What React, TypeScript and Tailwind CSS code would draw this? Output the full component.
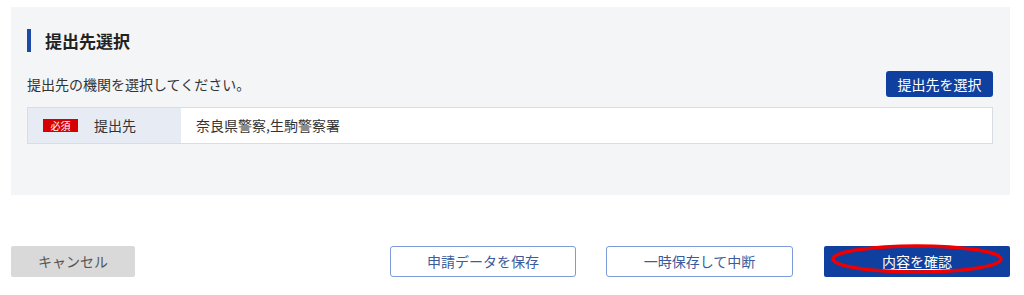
export default function App() {
  return (
    <div
      className="w-[1024px] h-[295px] bg-white pt-[7px] text-[#333]"
      style={{ fontFamily: '"Noto Sans CJK JP", "Noto Sans", sans-serif' }}
    >
      {/* 提出先選択 panel */}
      <section className="ml-[11px] w-[999px] h-[188px] bg-[#f4f5f7] pl-[16px] pr-[17px] pt-[22px]">
        <h2 className="flex h-[23px] items-center border-l-[4px] border-[#1c4aa6] pl-[14px] text-[17px] font-bold text-[#222]">
          提出先選択
        </h2>

        <div className="mt-[19px] flex h-[26px] items-center justify-between">
          <p className="text-[14px] leading-none text-[#333]">
            提出先の機関を選択してください。
          </p>
          <button className="h-[26px] w-[107px] rounded-[3px] bg-[#0f3f9f] text-[14px] text-white">
            提出先を選択
          </button>
        </div>

        <div className="mt-[10px] flex h-[37px] border border-[#d8dce3] bg-white">
          <div className="flex w-[153px] items-center bg-[#e6ebf4] pl-[15px]">
            <span className="flex h-[13px] w-[35px] items-center justify-center bg-[#d60000] text-[10px] leading-none text-white">
              必須
            </span>
            <span className="ml-[16px] text-[14px] text-[#333]">提出先</span>
          </div>
          <div className="flex items-center pl-[15px] text-[14px] text-[#333]">
            奈良県警察,生駒警察署
          </div>
        </div>
      </section>

      {/* Footer buttons */}
      <div className="mt-[51px] flex h-[31px] pl-[11px]">
        <button className="h-[31px] w-[124px] rounded-[2px] bg-[#d9d9d9] text-[14px] text-[#555]">
          キャンセル
        </button>
        <button className="ml-[255px] h-[31px] w-[186px] rounded-[3px] border border-[#7d9bd6] bg-white text-[14px] text-[#3b5b9b]">
          申請データを保存
        </button>
        <button className="ml-[30px] h-[31px] w-[187px] rounded-[3px] border border-[#7d9bd6] bg-white text-[14px] text-[#3b5b9b]">
          一時保存して中断
        </button>
        <button className="relative ml-[31px] h-[31px] w-[186px] rounded-[2px] bg-[#0f3f9f] text-[14px] text-white">
          <span className="underline underline-offset-2">内容を確認</span>
          <svg
            className="pointer-events-none absolute left-[5px] top-[-3px]"
            width="176"
            height="32"
            viewBox="0 0 176 32"
          >
            <ellipse cx="88" cy="16" rx="84" ry="13" fill="none" stroke="#ee0000" strokeWidth="3.5" />
          </svg>
        </button>
      </div>
    </div>
  )
}
